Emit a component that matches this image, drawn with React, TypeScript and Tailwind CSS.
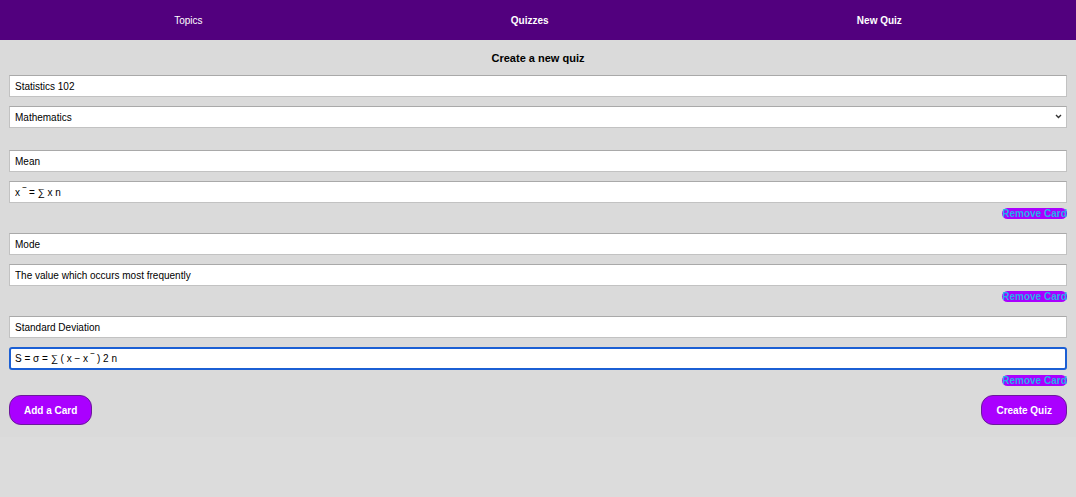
import { useState } from "react"

type Card = {
  id: number
  front: string
  back: string
}

const initialCards: Card[] = [
  { id: 1, front: "Mean", back: "x ‾ = ∑ x n" },
  { id: 2, front: "Mode", back: "The value which occurs most frequently" },
  { id: 3, front: "Standard Deviation", back: "S = σ = ∑ ( x − x ‾ ) 2 n" },
]

const inputClass =
  "block w-full h-[22px] bg-white border border-[#c2c2c2] border-t-[#a9a9a9] px-[5px] text-[10px] text-black outline-none"

const App = () => {
  const [name, setName] = useState("Statistics 102")
  const [topic, setTopic] = useState("Mathematics")
  const [cards, setCards] = useState<Card[]>(initialCards)

  const removeCard = (id: number) => {
    setCards(cards.filter((card) => card.id !== id))
  }

  const addCard = () => {
    setCards([...cards, { id: Date.now(), front: "", back: "" }])
  }

  return (
    <div className="min-h-screen bg-[#dcdcdc]" style={{ fontFamily: '"Liberation Sans", Arial, sans-serif' }}>
      {/* nav */}
      <nav className="h-10 bg-[#52007e] text-white text-[10px]">
        <ul className="flex h-full items-center px-5 pt-px">
          <li className="flex-auto text-center">Topics</li>
          <li className="flex-auto text-center font-bold">Quizzes</li>
          <li className="flex-auto text-center font-bold">New Quiz</li>
        </ul>
      </nav>

      <section className="bg-[#dadada] px-[9px] pt-[10px] pb-[12px]">
        <h1 className="text-center text-[11px] font-bold leading-4 text-black">Create a new quiz</h1>

        <form className="mt-[9px]" onSubmit={(e) => e.preventDefault()}>
          <input
            type="text"
            value={name}
            onChange={(e) => setName(e.target.value)}
            className={inputClass}
          />
          <div className="relative mt-[9px]">
            <select
              value={topic}
              onChange={(e) => setTopic(e.target.value)}
              className={inputClass + " appearance-none"}
            >
              <option>Mathematics</option>
              <option>Physics</option>
              <option>History</option>
            </select>
            <svg
              className="pointer-events-none absolute right-[5px] top-[8px]"
              width="7"
              height="5"
              viewBox="0 0 7 5"
            >
              <path d="M1 1 L3.5 3.5 L6 1" fill="none" stroke="#333" strokeWidth="1.4" />
            </svg>
          </div>

          <div className="mt-[22px] flex flex-col gap-[14px]">
            {cards.map((card, i) => (
              <div key={card.id} className="flex flex-col">
                <input type="text" defaultValue={card.front} className={inputClass} />
                {i === cards.length - 1 ? (
                  <input
                    type="text"
                    defaultValue={card.back}
                    className="mt-[9px] block w-full h-[23px] bg-white border-2 border-[#1b5fd4] rounded-[3px] px-[4px] text-[10px] text-black outline-none"
                  />
                ) : (
                  <input type="text" defaultValue={card.back} className={inputClass + " mt-[9px]"} />
                )}
                <div className="mt-[5px] flex justify-end">
                  <button
                    type="button"
                    onClick={() => removeCard(card.id)}
                    className="h-[11px] w-[65px] rounded-full bg-[#aa00ff] text-[10px] font-bold leading-[11px] text-[#1fb0ea] whitespace-nowrap overflow-visible"
                  >
                    Remove Card
                  </button>
                </div>
              </div>
            ))}
          </div>

          <div className="mt-[9px] flex justify-between">
            <button
              type="button"
              onClick={addCard}
              className="h-[30px] rounded-[12px] border border-[#6b1a9a] bg-[#aa00ff] px-[14px] text-[10px] font-bold text-white"
            >
              Add a Card
            </button>
            <button
              type="submit"
              className="h-[30px] rounded-[12px] border border-[#6b1a9a] bg-[#aa00ff] px-[14px] text-[10px] font-bold text-white"
            >
              Create Quiz
            </button>
          </div>
        </form>
      </section>
    </div>
  )
}

export default App
